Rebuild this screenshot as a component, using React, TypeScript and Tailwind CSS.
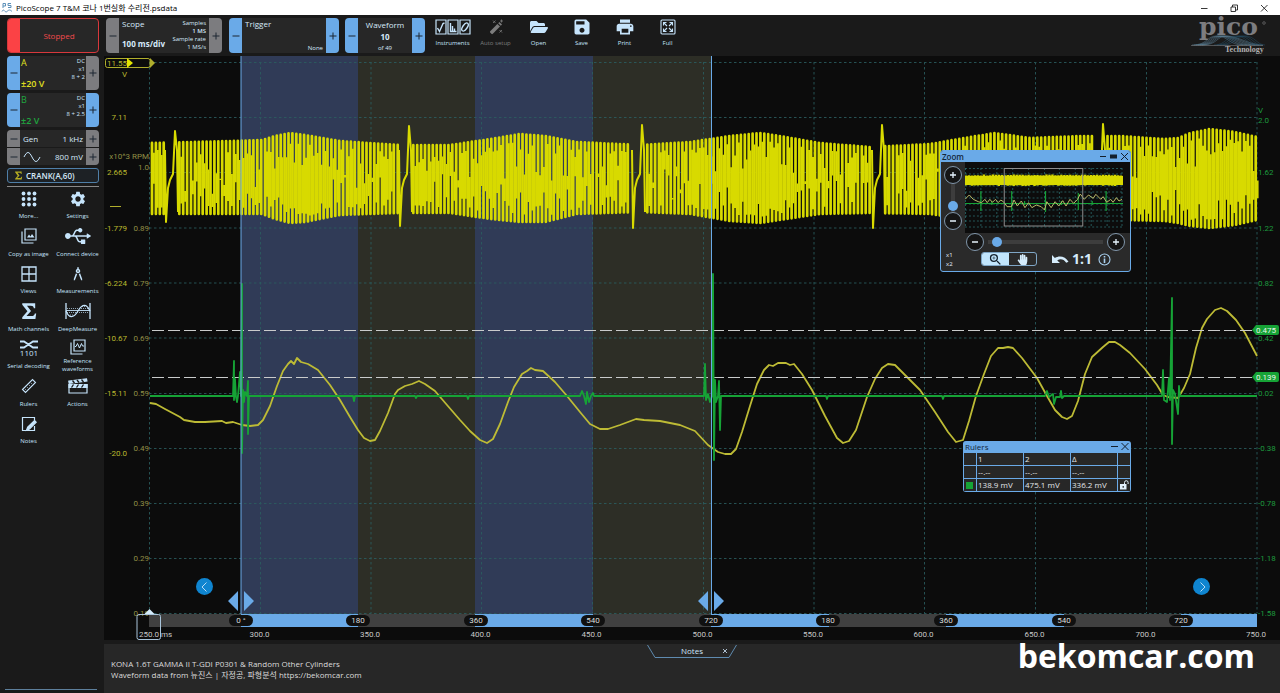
import { useState } from 'react';
import type { ReactNode } from 'react';
import { MdArchitecture, MdPrint, MdSave, MdSettings, MdZoomIn } from 'react-icons/md';
import { FaFolderOpen, FaHandPaper, FaUsb } from 'react-icons/fa';

type Point = [number, number];

const BLUE = '#6aaae8';

const gridX = [149.5, 260.5, 371, 481.5, 592.5, 703.5, 814, 924.5, 1035.5, 1146.5, 1257];
const gridY = [62.5, 117.5, 172.5, 228, 283, 338, 393.5, 448.5, 503.5, 558.5, 613.5];

const voltLabels = [
  { y: 74, text: 'V' },
  { y: 117, text: '7.11' },
  { y: 172, text: '2.665' },
  { y: 228, text: '-1.779' },
  { y: 283, text: '-6.224' },
  { y: 338, text: '-10.67' },
  { y: 393, text: '-15.11' },
  { y: 453, text: '-20.0' },
];

const rpmLabels = [
  { y: 156, text: 'x10^3 RPM' },
  { y: 167, text: '1.0' },
  { y: 228, text: '0.89' },
  { y: 283, text: '0.79' },
  { y: 338, text: '0.69' },
  { y: 393, text: '0.59' },
  { y: 448, text: '0.49' },
  { y: 503, text: '0.39' },
  { y: 558, text: '0.29' },
  { y: 613, text: '0.19' },
];

const channelBLabels = [
  { y: 110, text: 'V' },
  { y: 120, text: '2.0' },
  { y: 172, text: '1.62' },
  { y: 228, text: '1.22' },
  { y: 283, text: '0.82' },
  { y: 338, text: '0.42' },
  { y: 393, text: '0.02' },
  { y: 448, text: '-0.38' },
  { y: 503, text: '-0.78' },
  { y: 558, text: '-1.18' },
  { y: 613, text: '-1.58' },
];

const timeLabels = ['300.0', '350.0', '400.0', '450.0', '500.0', '550.0', '600.0', '650.0', '700.0', '750.0'];

const degrees = [
  { x: 241, text: '0 °' },
  { x: 358, text: '180' },
  { x: 476, text: '360' },
  { x: 593, text: '540' },
  { x: 711, text: '720' },
  { x: 828, text: '180' },
  { x: 946, text: '360' },
  { x: 1064, text: '540' },
  { x: 1181, text: '720' },
];

// top and bottom envelope of the crank sensor signal: x, top, bottom
const envelope = [
  [150, 143, 214], [230, 141, 214], [262, 140, 214], [275, 136, 219], [290, 133, 223],
  [305, 135, 222], [340, 141, 215], [400, 145, 213], [450, 145, 213], [490, 139, 219],
  [520, 134, 222], [545, 136, 222], [577, 142, 214], [640, 145, 212], [690, 142, 214],
  [730, 136, 221], [760, 133, 223], [780, 136, 220], [820, 143, 214], [870, 147, 213],
  [930, 144, 214], [970, 137, 220], [995, 133, 222], [1030, 138, 218], [1080, 136, 220],
  [1120, 136, 220], [1165, 139, 221], [1178, 138, 223], [1190, 133, 226], [1210, 129, 228],
  [1235, 132, 225], [1257, 137, 220],
];

// missing teeth of the reluctor ring: x of the spike and its peak
const missingTeeth = [
  { x: 176, top: 131, bottom: 222 },
  { x: 410, top: 126, bottom: 226 },
  { x: 643, top: 125, bottom: 228 },
  { x: 883, top: 125, bottom: 228 },
  { x: 1104, top: 124, bottom: 226 },
];

const rpmPoints: Point[] = [
  [150, 403], [156, 404], [165, 409], [180, 417], [184, 420], [195, 422], [205, 422], [222, 421],
  [226, 423], [233, 422], [242, 425], [250, 426], [258, 425], [263, 420], [270, 406], [277, 386],
  [283, 371], [288, 364], [291, 361], [294, 364], [297, 358], [301, 362], [308, 364], [318, 370],
  [330, 385], [340, 400], [350, 417], [358, 430], [364, 438], [370, 441], [375, 440], [380, 431],
  [388, 413], [395, 394], [398, 390], [405, 386], [412, 384], [419, 381], [425, 384], [435, 391],
  [447, 405], [460, 420], [470, 431], [480, 440], [487, 443], [493, 439], [500, 424], [508, 402],
  [514, 387], [522, 374], [527, 371], [531, 368], [535, 370], [543, 371], [555, 382], [567, 396],
  [580, 412], [590, 424], [600, 429], [608, 429], [620, 425], [636, 419], [644, 420], [660, 421],
  [680, 425], [695, 431], [708, 445], [718, 452], [725, 454], [731, 454], [736, 449], [742, 432],
  [750, 406], [757, 384], [764, 370], [769, 365], [773, 366], [778, 363], [786, 363], [790, 365],
  [794, 364], [802, 374], [812, 390], [825, 416], [837, 438], [843, 443], [849, 441], [856, 430],
  [863, 409], [867, 397], [875, 379], [882, 368], [888, 364], [895, 365], [904, 374], [920, 390],
  [935, 412], [948, 432], [956, 442], [963, 440], [969, 421], [976, 396], [984, 374], [991, 356],
  [998, 348], [1003, 348], [1008, 347], [1013, 348], [1022, 358], [1037, 378], [1047, 396],
  [1055, 410], [1062, 417], [1067, 419], [1072, 416], [1078, 401], [1085, 374], [1092, 357],
  [1103, 347], [1109, 342], [1115, 342], [1120, 345], [1130, 353], [1145, 369], [1157, 385],
  [1163, 395], [1168, 397], [1178, 398], [1184, 388], [1190, 374], [1196, 348], [1202, 328],
  [1207, 319], [1215, 310], [1221, 308], [1227, 311], [1236, 320], [1245, 333], [1257, 356],
];

const channelBPoints: Point[] = [
  [150, 396], [233, 396], [234, 361], [234, 400], [235, 379], [236, 397], [237, 402], [238, 396],
  [240, 372], [241, 396], [242, 284], [242, 453], [243, 390], [244, 402], [245, 392], [247, 396],
  [248, 381], [248, 434], [249, 396], [353, 396], [354, 401], [355, 396], [415, 396], [416, 398],
  [417, 396], [467, 396], [468, 399], [469, 396], [580, 396], [582, 391], [584, 396], [586, 404],
  [587, 392], [589, 402], [591, 396], [593, 393], [594, 396], [704, 396], [705, 364], [706, 400],
  [708, 394], [710, 402], [712, 396], [713, 274], [714, 460], [715, 380], [716, 402], [718, 396],
  [719, 381], [720, 430], [721, 396], [826, 396], [827, 399], [828, 396], [942, 396], [943, 399],
  [944, 396], [1045, 396], [1047, 391], [1049, 397], [1053, 394], [1054, 404], [1056, 397],
  [1060, 397], [1061, 391], [1062, 398], [1064, 396], [1162, 396], [1163, 370], [1164, 400],
  [1167, 402], [1169, 378], [1170, 400], [1172, 298], [1172, 444], [1173, 390], [1175, 394],
  [1178, 414], [1179, 386], [1180, 396], [1257, 396],
];

// overview trace of the zoom window, in thirds of a pixel
const overviewPoints: Point[] = [
  [0, 94], [13, 81], [25, 94], [40, 101], [50, 104], [60, 94], [67, 104], [75, 94], [83, 103],
  [92, 94], [100, 104], [108, 96], [117, 102], [127, 116], [140, 116], [148, 96], [158, 114],
  [170, 99], [181, 119], [192, 104], [202, 119], [215, 111], [230, 116], [240, 126], [247, 101],
  [260, 119], [272, 101], [283, 114], [295, 98], [305, 114], [317, 94], [328, 106], [340, 94],
  [348, 78], [360, 94], [373, 81], [387, 91], [395, 79], [410, 94], [417, 86], [428, 103],
  [440, 94], [447, 103], [457, 89], [465, 99], [474, 94],
];

function toPath(points: Point[]) {
  return 'M' + points.map(([x, y]) => `${x} ${y}`).join('L');
}

function envelopeAt(x: number) {
  let i = 1;
  while (i < envelope.length - 1 && envelope[i][0] < x) i++;
  const [x0, t0, b0] = envelope[i - 1];
  const [x1, t1, b1] = envelope[i];
  const f = (x - x0) / (x1 - x0);
  return { top: t0 + (t1 - t0) * f, bottom: b0 + (b1 - b0) * f };
}

function noise(n: number) {
  const s = Math.sin(n * 78.233) * 43758.5453;
  return s - Math.floor(s);
}

function buildCrank() {
  let teeth = '';
  let body = '';
  let n = 0;
  for (let x = 152; x < 1257; x += 3.9) {
    n++;
    const inGap = missingTeeth.some((m) => x > m.x - 12 && x < m.x + 1);
    if (inGap) continue;
    const { top, bottom } = envelopeAt(x);
    teeth += `M${x.toFixed(1)} ${top.toFixed(1)}V${bottom.toFixed(1)}`;
    const beforeGap = missingTeeth.some((m) => x + 4 > m.x - 12 && x < m.x);
    if (beforeGap) continue;
    // gaps between the teeth reach deeper where the amplitude is low
    const depth = 0.7 + Math.max(0, top - 131) / 22;
    const upper = 7 + 40 * depth * noise(n) ** 1.7;
    const lower = 6 + 30 * depth * noise(n + 500) ** 1.7;
    if (top + upper < bottom - lower) {
      body += `M${(x + 1.9).toFixed(1)} ${(top + upper).toFixed(1)}V${(bottom - lower).toFixed(1)}`;
    }
  }
  return { teeth, body };
}

const crank = buildCrank();

const crankSpikes = missingTeeth
  .map(
    ({ x, top, bottom }) =>
      `M${x - 11} 150L${x - 10} ${bottom}L${x - 8} 188L${x - 6} 180L${x - 3} 174L${x - 1} ${top}L${x + 1} 150L${x + 2} 212`,
  )
  .join('');

function StepButton({ sign, active = false }: { sign: '+' | '−'; active?: boolean }) {
  return (
    <button
      type="button"
      aria-label={sign === '+' ? 'Increase' : 'Decrease'}
      className={`flex w-[13px] shrink-0 items-center justify-center ${
        active ? 'bg-[#6aaae8]' : 'bg-[#7c7c7f]'
      }`}
    >
      <svg viewBox="0 0 8 8" className="size-2 stroke-[#1c2733]" strokeWidth="1">
        <path d={sign === '+' ? 'M0.5 4H7.5M4 0.5V7.5' : 'M0.5 4H7.5'} />
      </svg>
    </button>
  );
}

function ChannelBox({
  name,
  range,
  info,
  color,
  plusActive,
}: {
  name: string;
  range: string;
  info: string[];
  color: string;
  plusActive: boolean;
}) {
  return (
    <div className="flex h-[34px] overflow-hidden rounded bg-[#272727]">
      <StepButton sign="−" active />
      <div className={`flex flex-1 justify-between px-px ${color}`}>
        <div className="flex flex-col justify-between pt-px text-[9px] leading-3 whitespace-nowrap">
          <span>{name}</span>
          <span className="font-semibold">{range}</span>
        </div>
        <div className="flex flex-col pt-px text-right text-[6px] leading-2 whitespace-nowrap text-[#cfe6fa]">
          {info.map((line) => (
            <span key={line}>{line}</span>
          ))}
        </div>
      </div>
      <StepButton sign="+" active={plusActive} />
    </div>
  );
}

function ToolButton({ label, dim = false, children }: { label: string; dim?: boolean; children: ReactNode }) {
  return (
    <button
      type="button"
      disabled={dim}
      className={`flex w-[43px] shrink-0 flex-col items-center gap-px text-[6px] leading-[10px] whitespace-nowrap ${
        dim ? 'text-[#7d7d7d]' : 'text-[#c6e4fb]'
      }`}
    >
      <span className="flex h-5 items-center">{children}</span>
      {label}
    </button>
  );
}

function InstrumentsIcon() {
  return (
    <svg viewBox="0 0 36 16" className="h-4 w-9" fill="none" stroke="currentColor" strokeWidth="1.2">
      <path d="M1 1h10v14H1zM13 1h10v14H13zM25 1h10v14H25z" />
      <path d="M2.500 9 4.500 12.500 8 4.500 9.500 4M15.500 4v8.500h6M17.500 12.500V7M19.500 12.500V9.500" strokeWidth="1.4" />
      <ellipse cx="30" cy="8" rx="2.200" ry="4.600" transform="rotate(35 30 8)" strokeWidth="1.4" />
    </svg>
  );
}

function AutoSetupIcon() {
  return (
    <svg viewBox="0 0 16 16" className="size-4" fill="currentColor">
      <path d="M2.200 12.200 9.400 5l2.600 2.600-7.200 7.200a1 1 0 0 1-1.400 0l-1.200-1.200a1 1 0 0 1 0-1.400z" />
      <path d="M10.200 4.200 11.400 3 14 5.600l-1.200 1.200z" />
      <path d="m5 1.500 2.500 2.500M7.500 1.500 5 4M13.500 0.500v3M12 2h3M11.500 11l2.500 2.500M14 11l-2.500 2.500" stroke="currentColor" strokeWidth="0.8" />
    </svg>
  );
}

function FullIcon() {
  return (
    <svg viewBox="0 0 16 16" className="size-4" fill="none" stroke="currentColor" strokeWidth="1.1">
      <rect x="1" y="1" width="14" height="14" rx="1" />
      <path d="M3.500 6.500v-3h3M9.500 3.500h3v3M12.500 9.500v3h-3M6.500 12.500h-3v-3M4 4l3 3M12 4 9 7M12 12 9 9M4 12l3-3" />
    </svg>
  );
}

function DotsIcon() {
  return (
    <svg viewBox="0 0 16 16" className="size-4" fill="currentColor">
      {[2.5, 8, 13.5].map((y) =>
        [2.5, 8, 13.5].map((x) => <circle key={`${x}-${y}`} cx={x} cy={y} r="1.900" />),
      )}
    </svg>
  );
}

function CopyImageIcon() {
  return (
    <svg viewBox="0 0 16 16" className="size-4" fill="none" stroke="currentColor" strokeWidth="1.2">
      <path d="M4 1h11v11H4zM1 3.500V15h11.500" />
      <path d="m6 9.500 2-3 1.500 2 1.500-2.500 2.500 3.500z" fill="currentColor" stroke="none" />
    </svg>
  );
}

function ViewsIcon() {
  return (
    <svg viewBox="0 0 16 16" className="size-4" fill="none" stroke="currentColor" strokeWidth="1.3">
      <path d="M1 1h14v14H1zM8 1v14M1 8h14" />
    </svg>
  );
}

function SigmaIcon({ className }: { className: string }) {
  return (
    <svg viewBox="0 0 16 16" className={className} fill="currentColor">
      <path d="M2 1h11.500v4.500h-1.200c-.3-1.600-1-2.200-2.600-2.200H6.200L9.800 8l-4 4.500h4.400c1.700 0 2.500-.7 3-2.300h1.200L13.700 15H2v-1.400L6.600 8.300 2 2.400z" />
    </svg>
  );
}

function DeepMeasureIcon() {
  return (
    <svg viewBox="0 0 26 16" className="h-4 w-[26px]" fill="none" stroke="currentColor">
      <path d="M1 0v16M25 0v16" strokeWidth="1.3" />
      <path d="M1 8C4 15.500 8.500 15.500 13 8S21.500 0.500 25 8" strokeWidth="1.2" />
      <path d="M1 7.500h24" strokeWidth="0.9" />
      <path d="M2 5.500h12M2 9.500h10M14 5.500h10M12 9.500h12M5 12h4M17 3.500h4" strokeWidth="0.7" strokeDasharray="1 1" />
    </svg>
  );
}

function SerialIcon() {
  return (
    <svg viewBox="0 0 20 17" className="h-[17px] w-5" fill="none" stroke="currentColor">
      <path d="M1 1.500h4l9 6h5M1 7.500h4l9-6h5" strokeWidth="1.800" />
      <text x="10" y="16" fontSize="8" textAnchor="middle" fill="currentColor" stroke="none">
        1101
      </text>
    </svg>
  );
}

function ReferenceIcon() {
  return (
    <svg viewBox="0 0 16 16" className="size-4" fill="none" stroke="currentColor" strokeWidth="1.2">
      <path d="M4 1h11v11H4zM1 3.500V15h11.500" />
      <path d="M5 7.500h1l1.500-3 2 4.500 2-4.500 1 2.500H14" strokeWidth="1" />
    </svg>
  );
}

function RulersIcon() {
  return (
    <svg viewBox="0 0 16 16" className="size-4" fill="none" stroke="currentColor" strokeWidth="1.100">
      <path d="M1.500 11.500 11.500 1.500 14.500 4.500 4.500 14.500z" />
      <path d="m4 11 1 1M6 9l1 1M8 7l1 1M10 5l1 1" strokeWidth="0.6" />
    </svg>
  );
}

function ActionsIcon() {
  return (
    <svg viewBox="0 0 20 16" className="h-4 w-5" fill="none" stroke="currentColor" strokeWidth="1.200">
      <path d="M1 6.500h18v8.500H1z" />
      <path d="M1 6.500h18v3H1zM0.800 3.200 18.500 1l.4 2L1.200 5.300z" fill="currentColor" />
      <path d="m4.500 2.500 2 2.500M9 2l2 2.500M13.500 1.500l2 2.500M3.500 9.500 5.500 6.500M8.500 9.500l2-3M13.500 9.500l2-3" stroke="#1a1a1a" strokeWidth="1.300" />
    </svg>
  );
}

function NotesIcon() {
  return (
    <svg viewBox="0 0 16 16" className="size-4" fill="none" stroke="currentColor" strokeWidth="1.2">
      <path d="M13.500 4V1.500h-12v13h12V10" />
      <path d="m13.500 4.500 1.700 1.700-6.700 6.800-3 1.200 1.200-3z" fill="currentColor" />
    </svg>
  );
}

const menuItems = [
  { label: 'More...', icon: <DotsIcon /> },
  { label: 'Settings', icon: <MdSettings className="size-[18px]" /> },
  { label: 'Copy as image', icon: <CopyImageIcon /> },
  { label: 'Connect device', icon: <FaUsb className="size-[26px]" /> },
  { label: 'Views', icon: <ViewsIcon /> },
  { label: 'Measurements', icon: <MdArchitecture className="size-[18px]" /> },
  { label: 'Math channels', icon: <SigmaIcon className="size-[18px]" /> },
  { label: 'DeepMeasure', icon: <DeepMeasureIcon /> },
  { label: 'Serial decoding', icon: <SerialIcon /> },
  { label: 'Reference waveforms', icon: <ReferenceIcon />, twoLines: true },
  { label: 'Rulers', icon: <RulersIcon /> },
  { label: 'Actions', icon: <ActionsIcon /> },
  { label: 'Notes', icon: <NotesIcon /> },
];

function TitleBar() {
  return (
    <header className="flex h-[15px] items-center bg-white text-[8px] text-black">
      <svg viewBox="0 0 12 12" className="ml-px size-3" fill="none" stroke="#5b8fb8" strokeWidth="1">
        <path d="M2 6V1.500h2.500v2.500H2M10 1.500H7v2h3v2H7M1 9.500c2-4 3 2 5 0s3-2 5 0" />
      </svg>
      <h1 className="ml-[3px] whitespace-nowrap">PicoScope 7 T&amp;M 코나 1번실화 수리전.psdata</h1>
      <div className="mr-[12px] ml-auto flex gap-[22px]">
        {[
          { label: 'Minimize', d: 'M1 4.500H7.500' },
          { label: 'Restore', d: 'M1 3h4.500v4.500H1zM2.500 3V1H7.500v5H5.500' },
          { label: 'Close', d: 'M1 1 7.500 7.500M7.500 1 1 7.500' },
        ].map(({ label, d }) => (
          <button key={label} type="button" aria-label={label}>
            <svg viewBox="0 0 8 8" className="size-2" fill="none" stroke="#222" strokeWidth="0.9">
              <path d={d} />
            </svg>
          </button>
        ))}
      </div>
    </header>
  );
}

function Sidebar() {
  return (
    <aside className="flex w-[104px] shrink-0 flex-col pt-[3px]">
      <div className="flex flex-col gap-[3px] pr-[5px] pl-[7px]">
        <button
          type="button"
          className="flex h-[35px] overflow-hidden rounded border border-[#d8383c] bg-[#272727] text-[8px] text-[#f24a4c]"
        >
          <span className="h-full w-3 bg-[#fb4245]" />
          <span className="flex-1 self-center">Stopped</span>
        </button>
        <ChannelBox name="A" range="±20 V" info={['DC', 'x1', '8 + 2']} color="text-[#e0e020]" plusActive={false} />
        <ChannelBox name="B" range="±2 V" info={['DC', 'x1', '8 + 2.5']} color="text-[#1fa63f]" plusActive />
        <div className="flex flex-col gap-px overflow-hidden rounded text-[8px] text-[#d6e9f9]">
          <div className="flex h-[17px] bg-[#272727]">
            <StepButton sign="−" />
            <div className="flex flex-1 items-center justify-between px-[3px]">
              <span>Gen</span>
              <span>1 kHz</span>
            </div>
            <StepButton sign="+" />
          </div>
          <div className="flex h-[17px] bg-[#272727]">
            <StepButton sign="−" />
            <div className="flex flex-1 items-center justify-between px-[3px]">
              <svg viewBox="0 0 18 12" className="h-3 w-[18px]" fill="none" stroke="#c6e4fb">
                <path d="M1 6C4 0 6 0 9 6s5 6 8 0" />
              </svg>
              <span>800 mV</span>
            </div>
            <StepButton sign="+" />
          </div>
        </div>
        <button
          type="button"
          className="flex h-[15px] items-center gap-[3px] rounded-[3px] border border-[#4f7fa8] bg-[#1d2125] pl-[6px] text-[8px] font-semibold text-[#d6e9f9]"
        >
          <SigmaIcon className="size-[9px] text-[#b5ad22]" />
          CRANK(A,60)
        </button>
        <div className="h-px bg-[#8a8a8a]" />
      </div>

      <nav className="grid h-[263px] grid-cols-2 grid-rows-7 pr-[2px] pl-1">
        {menuItems.map(({ label, icon, twoLines }) => (
          <button
            key={label}
            type="button"
            className="flex flex-col items-center text-[6px] leading-[8px] text-[#c6e4fb]"
          >
            <span className={`flex shrink-0 items-center ${twoLines ? 'h-5' : 'h-[23px]'}`}>{icon}</span>
            <span className={twoLines ? 'w-10' : 'pt-[2px] whitespace-nowrap'}>{label}</span>
          </button>
        ))}
      </nav>
      <div className="mt-auto mr-[7px] mb-[3px] ml-[5px] h-px bg-[#5d7f9c]" />
    </aside>
  );
}

function PicoLogo() {
  return (
    <svg viewBox="0 0 84 40" className="mr-[6px] ml-auto h-10 w-[84px] overflow-visible" role="img" aria-label="pico Technology">
      <text x="9" y="19" fontSize="25" fill="#7d7d80" fontWeight="bold" className="font-['DejaVu_Serif',serif]">
        pico
      </text>
      <circle cx="74" cy="7" r="1.300" fill="none" stroke="#7d7d80" strokeWidth="0.6" />
      <g fill="none" stroke="#5d8299" strokeWidth="0.5">
        {[0, 2, 4, 6, 8, 10].map((o) => (
          <path key={o} d={`M${2 + o} 29C${18 + o} 29 ${16 + o} 20 ${27 + o} 20s${12 + o} 9 ${26 + o} 9`} />
        ))}
        {[0, 3, 6, 9].map((o) => (
          <path key={o} d={`M${24 + o} 29C${36 + o} 29 ${36 + o} 20 ${46 + o} 20s12 9 20 9`} stroke="#25506b" />
        ))}
      </g>
      <path d="M1 29.500h72" stroke="#8a8f92" strokeWidth="0.5" />
      <text x="35" y="36" fontSize="8" fontWeight="bold" fill="#b0b0b0" className="font-['Liberation_Serif',serif]">
        Technology
      </text>
    </svg>
  );
}

function Toolbar() {
  return (
    <div className="flex h-[41px] items-center">
      <div className="ml-0.5 flex h-[35px] w-[116px] overflow-hidden rounded bg-[#272727] text-[#d6e9f9]">
        <StepButton sign="−" />
        <div className="flex flex-1 justify-between px-[3px]">
          <div className="flex flex-col justify-between whitespace-nowrap">
            <span className="text-[8px] leading-3">Scope</span>
            <span className="pb-[3px] text-[8px] leading-3 font-bold">100 ms/div</span>
          </div>
          <div className="-ml-4 flex flex-col pt-px text-right text-[6px] leading-2 whitespace-nowrap">
            <span>Samples</span>
            <span className="font-semibold">1 MS</span>
            <span>Sample rate</span>
            <span>1 MS/s</span>
          </div>
        </div>
        <StepButton sign="+" />
      </div>

      <div className="ml-[7px] flex h-[35px] w-[110px] overflow-hidden rounded bg-[#272727] text-[#d6e9f9]">
        <StepButton sign="−" active />
        <div className="flex flex-1 flex-col justify-between px-[3px]">
          <span className="text-[8px] leading-3">Trigger</span>
          <span className="text-right text-[6px] leading-[10px]">None</span>
        </div>
        <StepButton sign="+" active />
      </div>

      <div className="ml-[6px] flex h-[35px] w-[80px] overflow-hidden rounded bg-[#272727] text-[#d6e9f9]">
        <StepButton sign="−" active />
        <div className="flex flex-1 flex-col items-center pt-px">
          <span className="text-[8px] leading-3">Waveform</span>
          <span className="text-[8px] leading-3 font-bold">10</span>
          <span className="text-[6px] leading-[10px]">of 49</span>
        </div>
        <StepButton sign="+" active />
      </div>

      <div className="ml-[6px] flex self-start pt-0.5">
        <ToolButton label="Instruments">
          <InstrumentsIcon />
        </ToolButton>
        <ToolButton label="Auto setup" dim>
          <AutoSetupIcon />
        </ToolButton>
        <ToolButton label="Open">
          <FaFolderOpen className="size-[18px]" />
        </ToolButton>
        <ToolButton label="Save">
          <MdSave className="size-5" />
        </ToolButton>
        <ToolButton label="Print">
          <MdPrint className="size-5" />
        </ToolButton>
        <ToolButton label="Full">
          <FullIcon />
        </ToolButton>
      </div>

      <PicoLogo />
    </div>
  );
}

function ScopeChart() {
  return (
    <svg
      viewBox="104 56 1176 584"
      className="block h-auto w-full bg-[#0c0c0c] font-['Roboto',sans-serif] text-[8px]"
      role="img"
      aria-label="Crank and ignition waveforms"
    >
      <g>
        <rect x="241" y="56" width="117" height="558" fill="#303b57" />
        <rect x="358" y="56" width="117" height="558" fill="#2d2e26" />
        <rect x="475" y="56" width="118" height="558" fill="#303b57" />
        <rect x="593" y="56" width="118" height="558" fill="#2d2e26" />
      </g>

      <g stroke="#2b5e60" strokeWidth="1" strokeDasharray="2.500 2.500" opacity="0.85">
        {gridX.map((x) => (
          <path key={x} d={`M${x} 62V613`} />
        ))}
        {gridY.map((y) => (
          <path key={y} d={`M149 ${y}H1257`} />
        ))}
      </g>

      {/* channel A */}
      <g fill="none" stroke="#d8da00">
        <path d={crank.teeth} strokeWidth="2.700" strokeLinecap="round" />
        <path d={crank.body} strokeWidth="2" />
        <path d={crankSpikes} strokeWidth="2" strokeLinejoin="round" />
      </g>

      <path d={toPath(rpmPoints)} fill="none" stroke="#bdbb35" strokeWidth="1.800" strokeLinejoin="round" />

      {/* ruler lines */}
      <g stroke="#c9cbcb" strokeWidth="1.200" strokeDasharray="12 4">
        <path d="M152 330.500H1257M152 377.500H1257" />
      </g>

      {/* channel B */}
      <path d={toPath(channelBPoints)} fill="none" stroke="#16a336" strokeWidth="1.800" strokeLinejoin="round" />

      <g stroke={BLUE} strokeWidth="1">
        <path d="M241 56V614M711.500 56V614" />
      </g>
      <g fill={BLUE}>
        <path d="M238 591v20l-10-10zM244 591v20l10-10zM708 591v20l-10-10zM714 591v20l10-10z" />
      </g>

      {/* left axes */}
      <g fill="#bab82e" textAnchor="end">
        {voltLabels.map(({ y, text }) => (
          <text key={y} x="127" y={y + 3}>
            {text}
          </text>
        ))}
        <text x="127" y="66">
          11.55
        </text>
      </g>
      <g fill="#918f45" textAnchor="end">
        {rpmLabels.map(({ y, text }) => (
          <text key={y + text} x="149" y={y + 3}>
            {text}
          </text>
        ))}
      </g>
      <path d="M110 206.500H121" stroke="#b0ae2c" />
      <rect x="105.500" y="58.500" width="44.500" height="9" rx="2" fill="none" stroke="#b0ae2c" />
      <path d="M127 58l6 5-6 5z" fill="#e2e400" />
      <path d="M150 58l5 5-5 5z" fill="#b0ae2c" />

      {/* right axis */}
      <g fill="#1d9a3e">
        {channelBLabels.map(({ y, text }) => (
          <text key={y} x="1258" y={y + 3}>
            {text}
          </text>
        ))}
      </g>
      {[
        { y: 330, text: '0.475' },
        { y: 377, text: '0.139' },
      ].map(({ y, text }) => (
        <g key={y}>
          <path d={`M1252 ${y}l4-5h21a2 2 0 0 1 2 2v6a2 2 0 0 1-2 2h-21z`} fill="#16a336" />
          <text x="1256" y={y + 3} fill="#e8f5ea">
            {text}
          </text>
        </g>
      ))}

      {/* time axis */}
      <rect x="149" y="614" width="1108" height="13" fill="#404040" />
      <g fill={BLUE}>
        <rect x="241" y="614" width="117" height="13" />
        <rect x="475" y="614" width="118" height="13" />
        <rect x="711" y="614" width="118" height="13" />
        <rect x="946" y="614" width="118" height="13" />
        <rect x="1181" y="614" width="76" height="13" />
      </g>
      {degrees.map(({ x, text }) => (
        <g key={x}>
          <rect x={x - 12} y="615" width="24" height="11" rx="5.500" fill="#101010" />
          <text x={x} y="623" textAnchor="middle" fill="#dcdcdc">
            {text}
          </text>
        </g>
      ))}
      <g fill="#c8c8c8" textAnchor="middle">
        {timeLabels.map((text, i) => (
          <text key={text} x={gridX[i + 1] - 1} y="637">
            {text}
          </text>
        ))}
      </g>
      <text x="139" y="637" fill="#c8c8c8">
        250.0 ms
      </text>
      <rect x="137" y="614.500" width="23.500" height="25" rx="2" fill="none" stroke="#a9c4da" />
      <path d="M149.500 609l5 5h-10z" fill="#d5ecfb" />
    </svg>
  );
}

function RoundButton({ sign }: { sign: '+' | '−' }) {
  return (
    <button
      type="button"
      aria-label={sign === '+' ? 'Zoom in' : 'Zoom out'}
      className="flex size-[18px] shrink-0 items-center justify-center rounded-full border border-[#8197ab] bg-[#151515]"
    >
      <svg viewBox="0 0 8 8" className="size-2" stroke="#e6f3fd" strokeWidth="1.3">
        <path d={sign === '+' ? 'M1 4H7M4 1V7' : 'M1 4H7'} />
      </svg>
    </button>
  );
}

const previewBand = Array.from({ length: 53 }, (_, i) => 1 + i * 3)
  .map((x, i) => `M${x} ${7.5 - noise(i)}V${17 + noise(i + 80)}`)
  .join('');

function ZoomWindow() {
  const [zoomX, setZoomX] = useState(4);
  const [zoomY, setZoomY] = useState(8);
  const [tool, setTool] = useState('zoom');

  return (
    <section className="absolute top-[94px] right-[149px] w-[191px] overflow-hidden rounded-[3px] border border-[#6aaae8] bg-[#2a2a2a]">
      <div className="flex h-[11px] items-center justify-between bg-[#6aaae8] pr-0.5 pl-px">
        <h2 className="text-[8px] leading-[11px] font-semibold text-[#14273a]">Zoom</h2>
        <svg viewBox="0 0 28 9" className="h-[9px] w-7" fill="none" stroke="#14202c">
          <path d="M0 4.500h6M21 1l7 7M28 1l-7 7" />
          <rect x="10.500" y="3" width="6" height="3" fill="#14202c" />
        </svg>
      </div>
      <div className="flex">
        <div className="flex w-[24px] flex-col items-center pt-[4px]">
          <RoundButton sign="+" />
          <input
            type="range"
            aria-label="Vertical zoom"
            min="0"
            max="100"
            value={zoomY}
            onChange={(e) => setZoomY(Number(e.target.value))}
            className="my-px h-[28px] w-[10px] appearance-none rounded bg-transparent [direction:rtl] [writing-mode:vertical-lr] [&::-webkit-slider-runnable-track]:bg-[linear-gradient(90deg,transparent_3px,#3d3d3d_3px,#3d3d3d_7px,transparent_7px)] [&::-webkit-slider-thumb]:size-[10px] [&::-webkit-slider-thumb]:appearance-none [&::-webkit-slider-thumb]:rounded-full [&::-webkit-slider-thumb]:bg-[#6aaae8]"
          />
          <RoundButton sign="−" />
        </div>
        <div className="h-[71px] flex-1 bg-[#0c0c0c] pt-[6px] pr-[7px]">
          <svg viewBox="0 0 159 60" preserveAspectRatio="none" className="h-[60px] w-full" fill="none">
            <g stroke="#2b6a6c" strokeWidth="0.8" strokeDasharray="2 2">
              {[0.5, 6, 12, 18, 24, 30, 36, 42, 48, 53, 59].map((y) => (
                <path key={y} d={`M0 ${y}H159`} />
              ))}
              {[0.5, 16, 32, 48, 64, 80, 95, 111, 127, 143, 158].map((x) => (
                <path key={x} d={`M${x} 0V60`} />
              ))}
            </g>
            <rect y="8" width="159" height="9" fill="#d8da00" />
            <path d={previewBand} stroke="#d8da00" strokeWidth="2.500" />
            <path
              d="M0 35.500H159M16 23V43M47 23V43M81 23V44M114 25V42M142 23V43M27 33v4M60 33v4M97 33v4M128 33v4"
              stroke="#16a336"
              strokeWidth="1.200"
            />
            <g transform="scale(0.3333)">
              <path d={toPath(overviewPoints)} stroke="#bdbb6a" strokeWidth="3" strokeLinejoin="round" />
            </g>
            <rect x="39.500" y="0.500" width="79" height="57.500" stroke="#8d8d8d" />
          </svg>
        </div>
      </div>
      <div className="flex h-[18px] items-center pr-[5px] pl-[25px]">
        <RoundButton sign="−" />
        <input
          type="range"
          aria-label="Horizontal zoom"
          min="0"
          max="100"
          value={zoomX}
          onChange={(e) => setZoomX(Number(e.target.value))}
          className="mx-1 h-[10px] min-w-0 flex-1 appearance-none bg-transparent [&::-webkit-slider-runnable-track]:bg-[linear-gradient(180deg,transparent_3px,#3d3d3d_3px,#3d3d3d_7px,transparent_7px)] [&::-webkit-slider-thumb]:size-[10px] [&::-webkit-slider-thumb]:appearance-none [&::-webkit-slider-thumb]:rounded-full [&::-webkit-slider-thumb]:bg-[#6aaae8]"
        />
        <RoundButton sign="+" />
      </div>
      <div className="flex h-[20px] items-center pb-1">
        <div className="w-[40px] pt-0.5 pl-[5px] text-[6px] leading-[9px] text-[#e6f3fd]">
          <p>x1</p>
          <p>x2</p>
        </div>
        <div className="flex h-[14px] w-[56px] overflow-hidden rounded-[3px] border border-[#7fa6c6]">
          <button
            type="button"
            aria-label="Zoom tool"
            onClick={() => setTool('zoom')}
            className={`flex flex-1 items-center justify-center ${tool === 'zoom' ? 'bg-[#c2e6fd] text-[#14202c]' : 'text-[#d5ecfb]'}`}
          >
            <MdZoomIn className="size-[15px] stroke-current" />
          </button>
          <button
            type="button"
            aria-label="Pan tool"
            onClick={() => setTool('pan')}
            className={`flex flex-1 items-center justify-center ${tool === 'pan' ? 'bg-[#c2e6fd] text-[#14202c]' : 'text-[#d5ecfb]'}`}
          >
            <FaHandPaper className="size-[11px]" />
          </button>
        </div>
        <button type="button" aria-label="Undo zoom" className="ml-[14px] text-[#d5ecfb]">
          <svg viewBox="0 0 18 12" className="h-3 w-[18px]" fill="currentColor">
            <path d="M1 2v8h8L6.200 7.400c3-2 6.600-1.400 9 2.400l2.300-1C14.500 3.500 8.500 2 3.900 5z" />
          </svg>
        </button>
        <button type="button" className="ml-[3px] text-[14px] leading-[14px] font-bold text-[#d5ecfb]">
          1:1
        </button>
        <button type="button" aria-label="Information" className="ml-[6px] text-[#a9d0ef]">
          <svg viewBox="0 0 13 13" className="size-[13px]" fill="none" stroke="currentColor" strokeWidth="1.100">
            <circle cx="6.500" cy="6.500" r="5.500" />
            <path d="M6.500 5.500V10M6.500 3v1.400" strokeWidth="1.600" />
          </svg>
        </button>
      </div>
    </section>
  );
}

function RulersWindow() {
  const cell = 'border border-[#6aaae8] px-px font-normal text-left';
  return (
    <section className="absolute top-[385px] right-[149px] w-[168px] overflow-hidden rounded-[3px] bg-[#272727]">
      <div className="flex h-[11px] items-center justify-between bg-[#6aaae8] px-0.5">
        <h2 className="text-[8px] leading-[11px] text-[#14273a]">Rulers</h2>
        <svg viewBox="0 0 18 9" className="h-[9px] w-[18px]" fill="none" stroke="#14202c">
          <path d="M0 4.500h7M10.500 1l7 7M17.500 1l-7 7" />
        </svg>
      </div>
      <table className="w-full table-fixed border-collapse text-[8px] leading-3 whitespace-nowrap text-[#e2e6ea]">
        <colgroup>
          <col className="w-[13px]" />
          <col />
          <col />
          <col />
          <col className="w-[13px]" />
        </colgroup>
        <thead>
          <tr>
            <th className={cell} />
            <th className={cell}>1</th>
            <th className={cell}>2</th>
            <th className={cell}>Δ</th>
            <th className={cell} />
          </tr>
        </thead>
        <tbody>
          <tr>
            <td className={cell} />
            <td className={cell}>--.--</td>
            <td className={cell}>--.--</td>
            <td className={cell}>--.--</td>
            <td className={cell} />
          </tr>
          <tr>
            <td className={cell}>
              <span className="ml-px block size-[7px] bg-[#16a336]" />
            </td>
            <td className={cell}>138.9 mV</td>
            <td className={cell}>475.1 mV</td>
            <td className={cell}>336.2 mV</td>
            <td className={cell}>
              <button type="button" aria-label="Lock rulers" className="block">
                <svg viewBox="0 0 10 10" className="size-[10px]" fill="none" stroke="#e2f1fc">
                  <rect x="1" y="4" width="6.500" height="5.500" fill="#e2f1fc" stroke="none" />
                  <path d="M5.500 4V2.500a1.800 1.800 0 0 1 3.600 0V4" />
                  <path d="M4.200 6v1.800" stroke="#272727" strokeWidth="1.200" />
                </svg>
              </button>
            </td>
          </tr>
        </tbody>
      </table>
    </section>
  );
}

function ScrollButton({ label, d, side }: { label: string; d: string; side: string }) {
  return (
    <button
      type="button"
      aria-label={label}
      className={`absolute bottom-[45px] flex size-[17px] items-center justify-center rounded-full bg-[#0f85d0] ${side}`}
    >
      <svg viewBox="0 0 12 12" className="size-3" fill="none" stroke="#b9dcf4">
        <path d={d} />
      </svg>
    </button>
  );
}

function NotesPanel() {
  return (
    <section className="relative mt-1 flex flex-1 flex-col bg-[#272727] text-[#dcdcdc]">
      <div className="flex h-[14px] justify-center">
        <div className="relative flex w-[90px] items-center justify-between">
          <svg viewBox="0 0 90 14" className="absolute h-[14px] w-[90px]" fill="none" stroke="#5f8bb0">
            <path d="M0.500 1 8 13.500H82L89.500 1" />
          </svg>
          <span className="ml-[34px] text-[8px] text-[#cfe6fa]">Notes</span>
          <button type="button" aria-label="Close notes" className="relative mr-[9px]">
            <svg viewBox="0 0 6 6" className="size-[6px]" stroke="#cfe6fa" strokeWidth="0.8">
              <path d="M1 1l4 4M5 1 1 5" />
            </svg>
          </button>
        </div>
      </div>
      <div className="pl-[7px] text-[8px] leading-[11px]">
        <p>KONA 1.6T GAMMA II T-GDI P0301 &amp; Random Other Cylinders</p>
        <p>Waveform data from 뉴진스 | 자정공, 파형분석 https://bekomcar.com</p>
      </div>
      <p className="absolute -top-1 right-[25px] text-[32px] leading-8 font-bold text-white">bekomcar.com</p>
    </section>
  );
}

export default function App() {
  return (
    <div className="flex min-h-screen flex-col bg-[#1a1a1a] font-['Open_Sans','Noto_Sans_CJK_KR',sans-serif]">
      <TitleBar />
      <div className="flex flex-1">
        <Sidebar />
        <main className="flex min-w-0 flex-1 flex-col">
          <Toolbar />
          <div className="relative">
            <ScopeChart />
            <ScrollButton label="Scroll left" d="M7.500 1.500 3 6l4.500 4.500" side="left-[92px]" />
            <ScrollButton label="Scroll right" d="M4.500 1.500 9 6l-4.500 4.500" side="right-[70px]" />
            <ZoomWindow />
            <RulersWindow />
          </div>
          <NotesPanel />
        </main>
      </div>
    </div>
  );
}
